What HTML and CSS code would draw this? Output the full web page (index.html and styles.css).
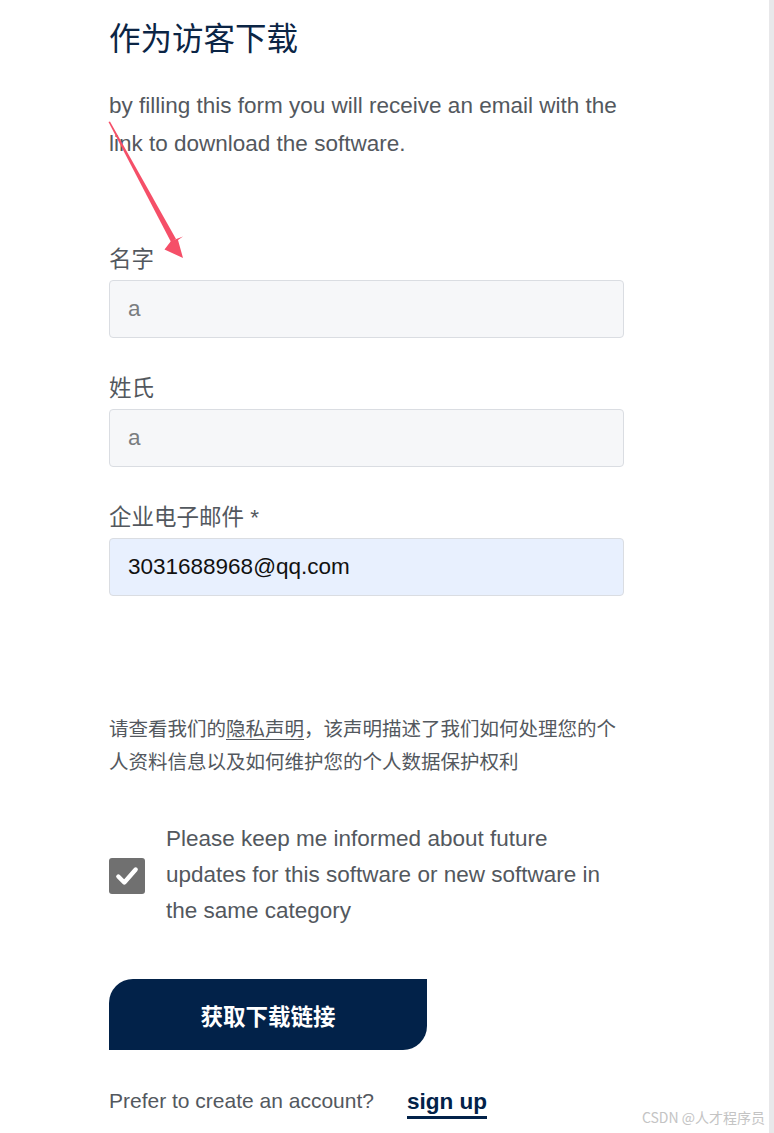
FILE: index.html
```html
<!DOCTYPE html>
<html lang="zh-CN">
<head>
<meta charset="utf-8">
<title>作为访客下载</title>
<link rel="stylesheet" href="styles.css">
</head>
<body>
<div class="page">
  <main class="content">
    <h1 class="title">作为访客下载</h1>
    <p class="intro">by filling this form you will receive an email with the link to download the software.</p>

    <form class="form">
      <div class="field">
        <label class="label">名字</label>
        <div class="input">a</div>
      </div>
      <div class="field">
        <label class="label">姓氏</label>
        <div class="input">a</div>
      </div>
      <div class="field field-last">
        <label class="label">企业电子邮件 *</label>
        <div class="input input-filled">3031688968@qq.com</div>
      </div>

      <p class="privacy">请查看我们的<span class="link">隐私声明</span>，该声明描述了我们如何处理您的个人资料信息以及如何维护您的个人数据保护权利</p>

      <div class="consent">
        <span class="checkbox">
          <svg width="26" height="26" viewBox="0 0 24 24"><path d="M4 12.5 L9.5 18 L20 6" fill="none" stroke="#fff" stroke-width="4" stroke-linecap="round" stroke-linejoin="round"/></svg>
        </span>
        <span class="consent-text">Please keep me informed about future updates for this software or new software in the same category</span>
      </div>

      <button type="button" class="submit">获取下载链接</button>

      <div class="signup-row">
        <span class="prefer">Prefer to create an account?</span>
        <a class="signup">sign up</a>
      </div>
    </form>

    <svg class="arrow" width="200" height="280" viewBox="0 0 200 280">
      <polygon points="108.5,122 110,121.5 176,239 171,242" fill="#f54f68"/>
      <polygon points="183,258 164.5,249.5 171,241 183,236.5 178,240" fill="#f54f68"/>
    </svg>
  </main>
  <div class="edge"></div>
  <div class="watermark">CSDN @人才程序员</div>
</div>
</body>
</html>
```

FILE: styles.css
```css
* { box-sizing: border-box; }

html, body {
  margin: 0;
  padding: 0;
  background: #ffffff;
}

body {
  font-family: "Liberation Sans", "Noto Sans CJK SC", Arial, sans-serif;
  color: #53585e;
}

.page {
  position: relative;
  display: flex;
  width: 774px;
  min-height: 1133px;
}

.content {
  position: relative;
  flex: 1;
  padding-left: 109px;
}

.edge {
  width: 5px;
  background: #e8e8ea;
}

.title {
  margin: 16px 0 0;
  font-family: "Noto Sans CJK SC", sans-serif;
  font-size: 31.5px;
  font-weight: 400;
  line-height: 40px;
  color: #0b2545;
}

.intro {
  width: 515px;
  margin: 31px 0 0;
  font-size: 22.5px;
  line-height: 38px;
  color: #53585e;
}

.form {
  display: flex;
  flex-direction: column;
  width: 515px;
  margin-top: 82px;
}

.field {
  display: flex;
  flex-direction: column;
  gap: 5px;
  margin-bottom: 36px;
}

.field-last {
  margin-bottom: 0;
}

.label {
  font-family: "Liberation Sans", "Noto Sans CJK SC", sans-serif;
  font-size: 22.5px;
  line-height: 30px;
  color: #53585e;
}

.input {
  height: 58px;
  padding: 0 18px;
  display: flex;
  align-items: center;
  background: #f6f7f9;
  border: 1px solid #dadde2;
  border-radius: 4px;
  font-size: 22.5px;
  color: #7a7d80;
}

.input-filled {
  background: #e8f0fe;
  color: #111111;
}

.privacy {
  margin: 115px 0 0;
  font-family: "Noto Sans CJK SC", sans-serif;
  font-size: 19.5px;
  line-height: 33px;
  color: #53585e;
}

.link {
  text-decoration: underline;
  text-underline-offset: 3px;
}

.consent {
  display: flex;
  align-items: center;
  gap: 21px;
  margin-top: 44px;
}

.checkbox {
  flex: none;
  width: 36px;
  height: 36px;
  margin-top: 2px;
  border-radius: 3px;
  background: #707070;
  display: flex;
  align-items: center;
  justify-content: center;
}

.consent-text {
  width: 458px;
  font-size: 22.5px;
  line-height: 36px;
  color: #53585e;
}

.submit {
  margin-top: 50px;
  width: 318px;
  height: 71px;
  border: none;
  border-radius: 24px 0 24px 0;
  background: #022249;
  color: #ffffff;
  font-family: "Noto Sans CJK SC", sans-serif;
  font-size: 22.5px;
  font-weight: 700;
  cursor: pointer;
}

.signup-row {
  display: flex;
  align-items: center;
  gap: 33px;
  margin-top: 36px;
  height: 30px;
}

.prefer {
  font-size: 21px;
  color: #53585e;
}

.signup {
  font-size: 22.5px;
  font-weight: 700;
  color: #022249;
  padding-bottom: 1px;
  border-bottom: 3px solid #022249;
  position: relative;
  top: 3px;
}

.arrow {
  position: absolute;
  left: 0;
  top: 0;
  pointer-events: none;
}

.watermark {
  position: absolute;
  right: 9px;
  bottom: 6px;
  font-family: "Noto Sans CJK SC", sans-serif;
  font-size: 14px;
  color: #c4c4c4;
}
```
